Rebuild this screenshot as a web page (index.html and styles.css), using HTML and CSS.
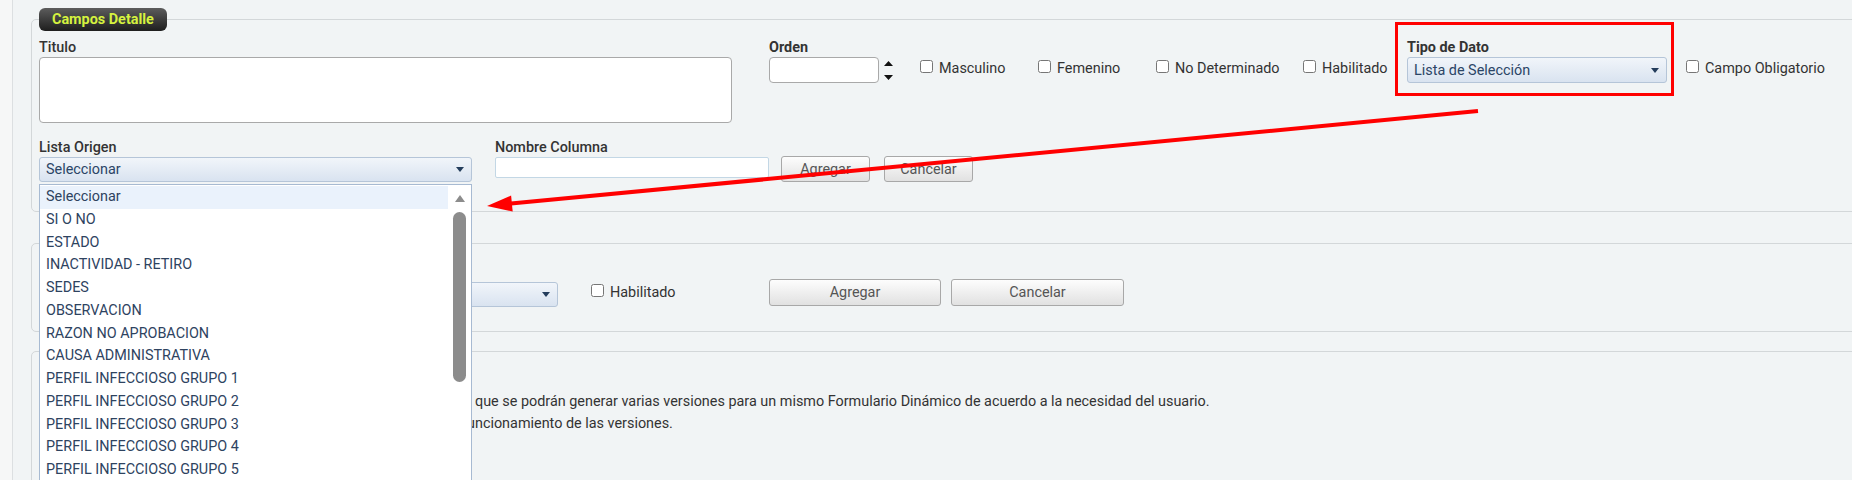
FILE: index.html
```html
<!DOCTYPE html>
<html lang="es">
<head>
<meta charset="utf-8">
<title>Campos Detalle</title>
<link rel="stylesheet" href="styles.css">
</head>
<body>
<div class="page">
  <div class="side"></div>
  <main class="panel">
    <fieldset class="box box-detail">
      <legend class="pill">Campos Detalle</legend>
      <div class="row">
        <div class="f-titulo">
          <label class="lbl">Titulo</label>
          <textarea class="ta"></textarea>
        </div>
        <div class="f-orden">
          <label class="lbl lbl-b">Orden</label>
          <div class="num">
            <input class="inp inp-orden" type="text">
            <svg class="spin" width="9" height="19" viewBox="0 0 9 19"><path d="M4.5 0L9 5H0z M0 14h9l-4.5 5z" fill="#111"/></svg>
          </div>
        </div>
        <label class="chk w-masc"><input type="checkbox"><span>Masculino</span></label>
        <label class="chk w-fem"><input type="checkbox"><span>Femenino</span></label>
        <label class="chk w-nod"><input type="checkbox"><span>No Determinado</span></label>
        <label class="chk w-hab"><input type="checkbox"><span>Habilitado</span></label>
        <div class="f-tipo">
          <label class="lbl lbl-b">Tipo de Dato</label>
          <div class="sel sel-tipo"><span>Lista de Selección</span><i class="caret"></i></div>
        </div>
        <label class="chk w-obl"><input type="checkbox"><span>Campo Obligatorio</span></label>
      </div>
      <div class="row row-2">
        <div class="f-lista">
          <label class="lbl">Lista Origen</label>
          <div class="sel sel-lista"><span>Seleccionar</span><i class="caret"></i></div>
          <div class="dropdown">
            <ul class="opts">
              <li class="on">Seleccionar</li>
              <li>SI O NO</li>
              <li>ESTADO</li>
              <li>INACTIVIDAD - RETIRO</li>
              <li>SEDES</li>
              <li>OBSERVACION</li>
              <li>RAZON NO APROBACION</li>
              <li>CAUSA ADMINISTRATIVA</li>
              <li>PERFIL INFECCIOSO GRUPO 1</li>
              <li>PERFIL INFECCIOSO GRUPO 2</li>
              <li>PERFIL INFECCIOSO GRUPO 3</li>
              <li>PERFIL INFECCIOSO GRUPO 4</li>
              <li>PERFIL INFECCIOSO GRUPO 5</li>
            </ul>
            <div class="sbar"><i class="sb-up"></i><i class="sb-thumb"></i></div>
          </div>
        </div>
        <div class="f-nombre">
          <label class="lbl">Nombre Columna</label>
          <input class="inp inp-nombre" type="text">
        </div>
        <button class="btn btn-s btn-add" type="button">Agregar</button>
        <button class="btn btn-s btn-can" type="button">Cancelar</button>
      </div>
    </fieldset>

    <fieldset class="box box-opts">
      <div class="row">
        <div class="sel sel-valor"><span></span><i class="caret"></i></div>
        <label class="chk w-hab2"><input type="checkbox"><span>Habilitado</span></label>
        <button class="btn btn-l" type="button">Agregar</button>
        <button class="btn btn-l btn-can2" type="button">Cancelar</button>
      </div>
    </fieldset>

    <fieldset class="box box-vers">
      <p class="note note-1">que se podrán generar varias versiones para un mismo Formulario Dinámico de acuerdo a la necesidad del usuario.</p>
      <p class="note note-2">uncionamiento de las versiones.</p>
    </fieldset>
  </main>

  <svg class="marks" width="1852" height="480" viewBox="0 0 1852 480">
    <rect x="1396.5" y="23.5" width="276" height="71" fill="none" stroke="#ff0000" stroke-width="3"/>
    <line x1="1478" y1="111" x2="511" y2="203.6" stroke="#ff0000" stroke-width="4"/>
    <polygon points="487,206 512.7,211.6 511.1,195.6" fill="#ff0000"/>
  </svg>
</div>
</body>
</html>
```

FILE: styles.css
```css
* { box-sizing: border-box; }
html, body { margin: 0; height: 100%; overflow: hidden; }
body {
  font-family: Roboto, "Liberation Sans", Arial, sans-serif;
  font-size: 14.4px;
  color: #333;
  background: #f6f7f7;
}
.page { position: relative; display: flex; height: 480px; }
.side { flex: none; width: 13px; border-right: 1px solid #dcdfe1; background: #f6f7f7; }
.panel {
  flex: 1;
  min-width: 0;
  overflow: hidden;
  background: #f1f4f5;
  padding: 8px 0 0 18px;
}

.box {
  margin: 0 -12px 0 0;
  min-width: 0;
  border: 1px solid #d3d7d9;
  border-radius: 5px;
  padding: 8px 0 29px 7px;
}
.pill {
  padding: 0 13px;
  height: 23px;
  line-height: 23px;
  border-radius: 6px;
  background: linear-gradient(#5c5c5c, #1e1e1e);
  color: #d5f23f;
  font-weight: 700;
  font-size: 14.4px;
}

.row { display: flex; align-items: flex-start; }
.row-2 { margin-top: 16px; }
.lbl { display: block; line-height: 17px; margin-bottom: 1px; font-weight: 500; color: #333; }
.lbl-b { font-weight: 700; }

.f-titulo { width: 693px; }
.ta {
  display: block;
  width: 693px;
  height: 66px;
  margin: 0;
  padding: 2px;
  border: 1px solid #a9a9a9;
  border-radius: 4px;
  background: #fff;
  resize: none;
}
.f-orden { margin-left: 37px; }
.num { display: flex; align-items: flex-start; }
.inp { display: block; margin: 0; background: #fff; font: inherit; }
.inp-orden { width: 110px; height: 26px; border: 1px solid #a9a9a9; border-radius: 4px; }
.spin { display: block; margin: 4px 0 0 5px; }

.chk {
  display: flex;
  align-items: baseline;
  gap: 6px;
  margin-top: 21px;
  line-height: 17px;
  color: #333;
}
.chk input { margin: 0; width: 13px; height: 13px; flex: none; }
.w-masc { margin-left: 27px; width: 118px; }
.w-fem { width: 118px; }
.w-nod { width: 147px; }
.w-hab { width: 104px; }
.f-tipo { width: 260px; }
.w-obl { margin-left: 19px; }

.sel {
  display: flex;
  align-items: center;
  justify-content: space-between;
  height: 26px;
  padding: 0 7px 0 6px;
  border: 1px solid #b5c5d8;
  border-radius: 3px;
  background: linear-gradient(#f1f5fa, #d9e3f0);
  color: #2b4566;
  white-space: nowrap;
}
.caret {
  width: 0;
  height: 0;
  border-left: 4.5px solid transparent;
  border-right: 4.5px solid transparent;
  border-top: 5px solid #243d5c;
}
.sel-lista { height: 25px; margin-top: 1px; }

.f-lista { position: relative; width: 433px; }
.dropdown {
  position: absolute;
  left: 0;
  top: 100%;
  width: 100%;
  height: 330px;
  margin-top: 2px;
  display: flex;
  background: #fff;
  border: 1px solid #a7bad2;
  z-index: 5;
}
.opts { flex: 1; list-style: none; margin: 0; padding: 1px 0 0; color: #2e435f; overflow: hidden; }
.opts li { height: 22.75px; line-height: 22.75px; padding-left: 6px; white-space: nowrap; }
.opts li.on { background: #eaf2fc; }
.sbar { flex: none; width: 23px; display: flex; flex-direction: column; align-items: center; padding-top: 10px; }
.sb-up {
  width: 0;
  height: 0;
  border-left: 5.5px solid transparent;
  border-right: 5.5px solid transparent;
  border-bottom: 7px solid #8c8c8c;
}
.sb-thumb { width: 13px; height: 170px; margin-top: 10px; border-radius: 7px; background: #8c8c8c; }

.f-nombre { margin-left: 23px; }
.inp-nombre { width: 274px; height: 21px; margin-top: 1px; border: 1px solid #c3d7e5; border-radius: 2px; }

.btn {
  font: inherit;
  color: #555;
  height: 26px;
  margin-top: 17px;
  padding: 0;
  border: 1px solid #a8a8a8;
  border-radius: 3px;
  background: linear-gradient(#fdfdfd, #e1e1e1);
}
.btn-s { width: 89px; }
.btn-add { margin-left: 12px; }
.btn-can { margin-left: 14px; }

.box-opts { margin-top: 31px; padding: 35px 0 24px 7px; }
.sel-valor { width: 519px; height: 25px; margin-top: 3px; }
.box-opts .chk { margin-top: 5px; }
.w-hab2 { margin-left: 33px; width: 178px; }
.btn-l { width: 172px; height: 27px; margin-top: 0; }
.btn-can2 { margin-left: 10px; width: 173px; }

.box-vers { margin-top: 19px; padding: 39px 0 120px 7px; }
.note { margin: 0; line-height: 22px; white-space: nowrap; color: #333; }
.note-1 { padding-left: 436px; }
.note-2 { padding-left: 428px; }

.marks { position: absolute; left: 0; top: 0; pointer-events: none; z-index: 10; }
```
